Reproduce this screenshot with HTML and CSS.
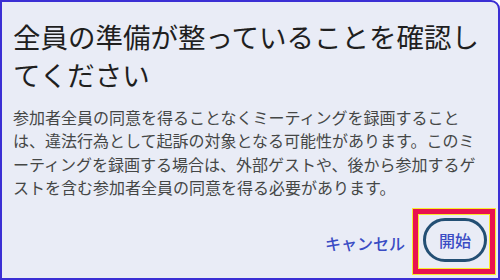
FILE: index.html
```html
<!DOCTYPE html>
<html lang="ja">
<head>
<meta charset="utf-8">
<link rel="stylesheet" href="styles.css">
</head>
<body>
<div class="dialog">
  <h1 class="title">全員の準備が整っていることを確認し<br>てください</h1>
  <p class="body">参加者全員の同意を得ることなくミーティングを録画すること<br>は、違法行為として起訴の対象となる可能性があります。このミ<br>ーティングを録画する場合は、外部ゲストや、後から参加するゲ<br>ストを含む参加者全員の同意を得る必要があります。</p>
  <div class="actions">
    <button class="btn-text">キャンセル</button>
    <div class="highlight">
      <button class="btn-outline">開始</button>
    </div>
  </div>
</div>
</body>
</html>
```
FILE: styles.css
```css
html, body {
  margin: 0;
  padding: 0;
  background: #ffffff;
}
.dialog {
  width: 500px;
  height: 280px;
  box-sizing: border-box;
  border: 2px solid #3b2fd4;
  border-top-right-radius: 9px;
  background: #e9ecf6;
  display: flex;
  flex-direction: column;
  padding: 15px 3px 4px 11px;
  font-family: "Noto Sans CJK JP", "Noto Sans", sans-serif;
}
.title {
  margin: 0;
  font-size: 27.5px;
  line-height: 38px;
  font-weight: 400;
  color: #1f1f1f;
  white-space: nowrap;
}
.body {
  margin: 13px 0 0 0;
  font-size: 16px;
  line-height: 23.4px;
  color: #454746;
  white-space: nowrap;
}
.actions {
  margin-top: auto;
  display: flex;
  justify-content: flex-end;
  align-items: center;
}
.btn-text {
  border: none;
  background: transparent;
  font-family: inherit;
  font-size: 16px;
  font-weight: 500;
  color: #3a4cc4;
  padding: 0;
  margin-right: 8px;
  margin-top: 3px;
}
.highlight {
  border: 5px solid #e8124f;
  box-shadow: inset 0 0 0 1px #f6ea30;
  outline: 1px solid #f6ea30;
  padding: 4px 3px 7px 5px;
  display: flex;
}
.btn-outline {
  width: 64px;
  height: 44px;
  box-sizing: border-box;
  border: 3px solid #234f74;
  border-radius: 22px;
  background: transparent;
  font-family: inherit;
  font-size: 16px;
  font-weight: 500;
  color: #3a4cc4;
  padding: 0;
}
```
